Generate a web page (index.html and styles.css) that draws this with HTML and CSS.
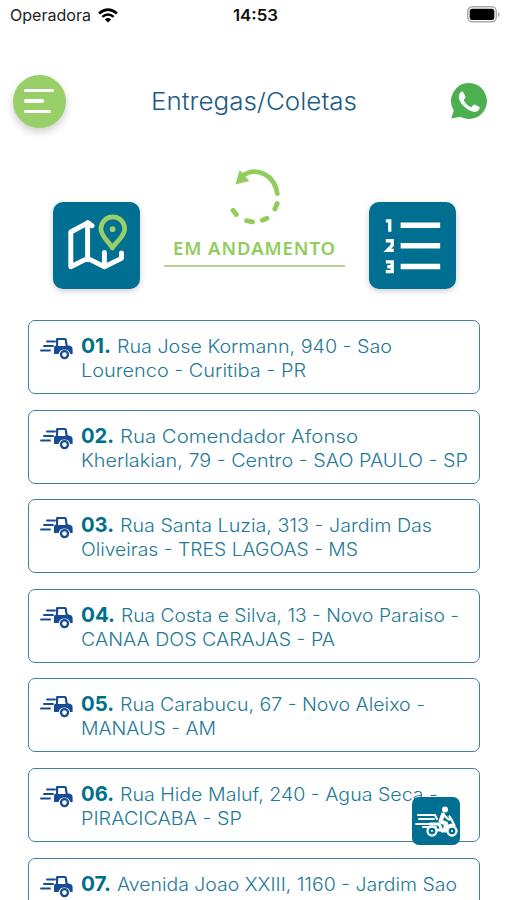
FILE: index.html
```html
<!DOCTYPE html>
<html lang="pt-BR">
<head>
<meta charset="utf-8">
<title>Entregas/Coletas</title>
<link rel="stylesheet" href="styles.css">
</head>
<body>
<svg class="defs" aria-hidden="true">
  <symbol id="tractor" viewBox="0 0 33 22">
    <path d="M7 3.5h8M4 8h9M1 12.5h9" stroke="#174b93" stroke-width="1.9" stroke-linecap="round" fill="none"/>
    <path fill="#174b93" fill-rule="evenodd" d="M17.2 0H25q1.500 0 1.800 1.500L27.700 7.300Q32.600 7.800 32.600 11V16h-2.400a6 6 0 0 0-11.600 0H14V9.800q0-2 2-2.400L16 1.200Q16 0 17.200 0ZM18.300 2L18 8h7.600L24.700 2Z"/>
    <circle cx="24.500" cy="16.600" r="3.500" fill="#fff" stroke="#174b93" stroke-width="2.300"/>
  </symbol>
</svg>
<div class="status">
  <span class="carrier"><span data-width="81">Operadora</span>
    <svg width="20" height="15" viewBox="0 0 20 15"><g fill="none" stroke="#000" stroke-width="2.500"><path d="M1 5.500Q10-2.200 19 5.500"/><path d="M4.300 8.900Q10 4 15.700 8.900"/></g><path d="M6.900 11.400Q10 8.700 13.100 11.400L10 14.500Z"/></svg>
  </span>
  <span class="time"><span data-width="45">14:53</span></span>
  <svg class="battery" width="34" height="17" viewBox="0 0 34 17"><rect x="1.800" y=".8" width="28.400" height="15" rx="4.500" fill="#fff" stroke="#aaa" stroke-width="1.500"/><rect x="3.700" y="2.700" width="24.600" height="11.200" rx="2.500"/><path d="M32 6v5q1.700-.5 1.700-2.500T32 6Z" fill="#aaa"/></svg>
</div>
<header>
  <div class="menu"><i></i><i></i><i></i></div>
  <h1><span data-width="206">Entregas/Coletas</span></h1>
  <svg class="whats" width="38" height="38" viewBox="0 0 38 38"><path fill="#4caf50" d="M19 1a18 18 0 1 1-8.700 33.800L1.200 36.600 3.800 28.500A18 18 0 0 1 19 1Z"/><path fill="#fff" d="M10.500 10.200q1.700-1.700 2.900.4l2 4q.5 1.100-.6 2.200l-1.200 1.500q3.200 5.600 7.800 7l2-2.200q.7-.8 1.700-.3l4 1.900q1.100.6.400 2.100-1.200 3-4.700 3.100-4.500 0-9.300-4.100-6-5.300-6.700-10.100-.2-3.500 1.700-5.500Z"/></svg>
</header>
<section class="modes">
  <div class="tile">
    <svg width="87" height="87" viewBox="0 0 88 88" fill="none" stroke-linecap="round" stroke-linejoin="round"><path d="M39.500 24L35.500 21 18 30.300V65.500L35 57 52 65.500 69.300 57V51.500M35 21V57M52 51V65" stroke="#fff" stroke-width="5"/><path d="M60 46.500C57 40.500 48.500 35 48.500 27a12 12 0 0 1 24 0C72.500 35 63.500 40.500 60 46.500Z" fill="#006f91" stroke="#98cf66" stroke-width="4.800"/><circle cx="60.300" cy="27.500" r="2.900" fill="#98cf66"/></svg>
  </div>
  <div class="progress">
    <svg width="54" height="60" viewBox="0 0 54 60" fill="none" stroke="#91cc5d" stroke-width="4.800" stroke-linecap="round"><path d="M14 8.800C29-1.500 47 9 49.300 26.500"/><path d="M49.200 36.500L46.800 42M39 51.200L34.500 53.200M24.500 54.800L18.500 53.700M8.300 47.500L5 43.300"/><path d="M12 4.500L8.500 16.500 20 13.500Z" fill="#91cc5d" stroke-width="1.500"/></svg>
    <strong><span data-width="163">EM ANDAMENTO</span></strong>
  </div>
  <div class="tile">
    <svg width="87" height="87" viewBox="0 0 88 88" fill="none" stroke="#fff"><path d="M32 23.500H72M32 44.200H72M32 65.200H72" stroke-width="5.500"/><g stroke-width="3.300"><path d="M17 19h4V30"/><path d="M17 39.200h6.500v4.600l-5 5.200h6.500"/><path d="M17 60.500h6.500v10H17M18.500 65.500h5"/></g></svg>
  </div>
</section>
<main>
  <article><svg class="tractor"><use href="#tractor"/></svg><p><b data-width="30">01.</b><span class="first" data-width="275">Rua Jose Kormann, 940 - Sao</span><br><span data-width="225">Lourenco - Curitiba - PR</span></p></article>
  <article><svg class="tractor"><use href="#tractor"/></svg><p><b data-width="33">02.</b><span class="first" data-width="238">Rua Comendador Afonso</span><br><span data-width="387">Kherlakian, 79 - Centro - SAO PAULO - SP</span></p></article>
  <article><svg class="tractor"><use href="#tractor"/></svg><p><b data-width="33">03.</b><span class="first" data-width="312">Rua Santa Luzia, 313 - Jardim Das</span><br><span data-width="277">Oliveiras - TRES LAGOAS - MS</span></p></article>
  <article><svg class="tractor"><use href="#tractor"/></svg><p><b data-width="34">04.</b><span class="first" data-width="338">Rua Costa e Silva, 13 - Novo Paraiso -</span><br><span data-width="254">CANAA DOS CARAJAS - PA</span></p></article>
  <article><svg class="tractor"><use href="#tractor"/></svg><p><b data-width="33">05.</b><span class="first" data-width="305">Rua Carabucu, 67 - Novo Aleixo -</span><br><span data-width="135">MANAUS - AM</span></p></article>
  <article><svg class="tractor"><use href="#tractor"/></svg><p><b data-width="33">06.</b><span class="first" data-width="318">Rua Hide Maluf, 240 - Agua Seca -</span><br><span data-width="161">PIRACICABA - SP</span></p></article>
  <article><svg class="tractor"><use href="#tractor"/></svg><p><b data-width="30">07.</b><span class="first" data-width="340">Avenida Joao XXIII, 1160 - Jardim Sao</span></p></article>
</main>
<div class="courier">
  <svg width="48" height="48" viewBox="0 0 48 48" fill="none" stroke="#fff" stroke-linecap="round" stroke-linejoin="round"><path d="M6 18h17l2 4M7 22h15M4 27h20M11 30h13" stroke-width="2"/><path d="M18 27h7.500q2 0 3 3l1.500 4h4q1-6 6-6M26 33h4" stroke-width="3"/><circle cx="33" cy="12.500" r="3" fill="#fff" stroke="none"/><path d="M31 17.500l-2.500 7 5.500 2-1 6" stroke-width="4"/><path d="M32.500 18.500l4 4h3M37.500 19.500l2 3 3 6" stroke-width="2.200"/><circle cx="20" cy="34" r="4.500" fill="#006f91" stroke-width="2.300"/><circle cx="40" cy="34" r="4.500" fill="#006f91" stroke-width="2.300"/><circle cx="20" cy="34" r="1" fill="#fff" stroke="none"/><circle cx="40" cy="34" r="1" fill="#fff" stroke="none"/></svg>
</div>
<script src="fit.js"></script>
</body>
</html>
```
FILE: styles.css
```css
* { box-sizing: border-box; }
body { margin: 0; width: 507px; height: 900px; overflow: hidden; background: #fff; font-family: Inter, "Liberation Sans", sans-serif; }
svg { display: block; flex: none; }
.defs { display: none; }
[data-width] { display: inline-block; white-space: nowrap; transform-origin: left; }
.status { display: grid; grid-template-columns: 1fr auto 1fr; align-items: center; height: 30px; padding: 0 7px 0 10px; font-size: 16px; color: #222; }
.carrier { display: flex; align-items: center; gap: 7px; }
.time { font-weight: 600; color: #111; }
.battery { justify-self: end; margin-top: -2px; }
header { display: grid; grid-template-columns: 53px 1fr 53px; align-items: center; height: 142px; padding: 0 19px 0 13px; }
.menu { display: flex; flex-direction: column; justify-content: center; gap: 7px; width: 53px; height: 53px; padding-left: 11px; border-radius: 50%; background: #98cf69; box-shadow: 0 4px 9px #0003; }
.menu i { width: 30px; height: 3.5px; border-radius: 2px; background: #fff; }
.menu i:nth-child(2) { width: 20px; }
.menu i:nth-child(3) { width: 27px; }
h1 { margin: 2px 0 0 85px; font-size: 24px; line-height: 30px; font-weight: 350; color: #1c5c84; }
.whats { justify-self: end; }
.modes { display: flex; justify-content: space-between; height: 148px; padding: 0 51px 0 53px; }
.tile { width: 87px; height: 87px; margin-top: 30px; border-radius: 10px; background: #006f91; box-shadow: 0 2px 6px #0003; }
.progress { display: flex; flex-direction: column; align-items: center; width: 181px; height: 95px; border-bottom: 2px solid #b5d58c; }
.progress svg { margin-top: -5px; }
.progress strong { margin-top: 9px; font: 600 18.5px/24px "Noto Sans", sans-serif; color: #91cc5d; }
main { display: flex; flex-direction: column; gap: 15.6px; padding: 0 27px 0 28px; }
article { display: flex; flex: none; gap: 8px; height: 74px; padding: 14px 0 0 11px; border: 1.5px solid #437f9d; border-radius: 7px; }
.tractor { width: 33px; height: 22px; margin-top: 3px; }
p { margin: 0; font-size: 18px; line-height: 24px; font-weight: 350; color: #237995; white-space: nowrap; }
p b { font-size: 20.5px; font-weight: 700; line-height: 20px; color: #006f8c; }
.first { margin-left: 6px; }
.courier { position: absolute; left: 412px; top: 797px; width: 48px; height: 48px; border-radius: 7px; background: #006f91; }
```
FILE: fit.js
```js
// Widen the letterforms so every label fills its intended measure.
document.querySelectorAll('[data-width]').forEach(function (el) {
  var target = Number(el.dataset.width);
  if (el.closest('strong')) {
    var extra = target - el.getBoundingClientRect().width;
    el.style.letterSpacing = extra / el.textContent.length + 'px';
    return;
  }
  var scale = target / el.getBoundingClientRect().width;
  el.style.width = target + 'px';
  el.style.transformOrigin = '0 50%';
  el.style.transform = 'scaleX(' + scale + ')';
});
```
